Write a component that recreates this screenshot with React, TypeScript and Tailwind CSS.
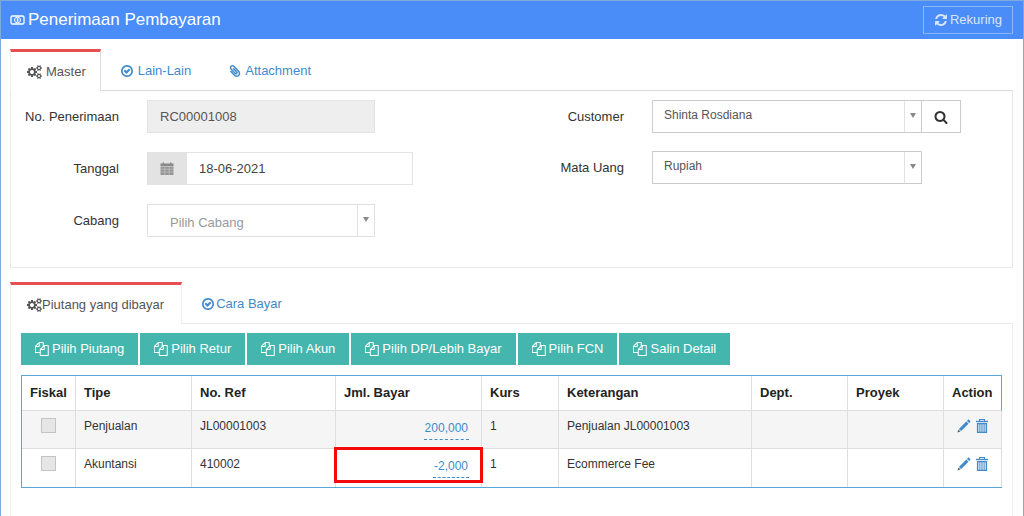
import React from 'react';
import { FaPaperclip } from 'react-icons/fa';

type IconProps = { className?: string };

const paths = {
  check:
    'M1299 813l-422 422q-19 19-45 19t-45-19l-294-294q-19-19-19-45t19-45l102-102q19-19 45-19t45 19l147 147 275-275q19-19 45-19t45 19l102 102q19 19 19 45t-19 45zm141 83q0-148-73-273t-198-198-273-73-273 73-198 198-73 273 73 273 198 198 273 73 273-73 198-198 73-273zm224 0q0 209-103 385.5t-279.5 279.5-385.5 103-385.5-103-279.5-279.5-103-385.5 103-385.5 279.5-279.5 385.5-103 385.5 103 279.5 279.5 103 385.5z',
  files:
    'M1664 384q40 0 68 28t28 68v1216q0 40-28 68t-68 28h-960q-40 0-68-28t-28-68v-288h-544q-40 0-68-28t-28-68v-672q0-40 20-88t48-76l408-408q28-28 76-48t88-20h416q40 0 68 28t28 68v328q68-40 128-40h416zm-544 213l-299 299h299v-299zm-640-384l-299 299h299v-299zm196 647l316-316v-416h-384v416q0 40-28 68t-68 28h-416v640h512v-256q0-40 20-88t48-76zm956 804v-1152h-384v416q0 40-28 68t-68 28h-416v640h896z',
  refresh:
    'M1639 1056q0 5-1 7-64 268-268 434.5t-478 166.5q-146 0-282.5-55t-243.5-157l-129 129q-19 19-45 19t-45-19-19-45v-448q0-26 19-45t45-19h448q26 0 45 19t19 45-19 45l-137 137q71 66 161 102t187 36q134 0 250-65t186-179q11-17 53-117 8-23 30-23h192q13 0 22.5 9.5t9.5 22.5zm25-800v448q0 26-19 45t-45 19h-448q-26 0-45-19t-19-45 19-45l138-138q-148-137-349-137-134 0-250 65t-186 179q-11 17-53 117-8 23-30 23h-199q-13 0-22.5-9.5t-9.5-22.5v-7q65-268 270-434.5t480-166.5q146 0 284 55.5t245 156.5l130-129q19-19 45-19t45 19 19 45z',
  search:
    'M1216 832q0-185-131.5-316.5t-316.5-131.5-316.5 131.5-131.5 316.5 131.5 316.5 316.5 131.5 316.5-131.5 131.5-316.5zm512 832q0 52-38 90t-90 38q-54 0-90-38l-343-342q-179 124-399 124-143 0-273.5-55.5t-225-150-150-225-55.5-273.5 55.5-273.5 150-225 225-150 273.5-55.5 273.5 55.5 225 150 150 225 55.5 273.5q0 220-124 399l343 343q37 37 37 90z',
  cogs:
    'M896 896q0-106-75-181t-181-75-181 75-75 181 75 181 181 75 181-75 75-181zm768 512q0-52-38-90t-90-38-90 38-38 90q0 53 37.5 90.5t90.5 37.5 90.5-37.5 37.5-90.5zm0-1024q0-52-38-90t-90-38-90 38-38 90q0 53 37.5 90.5t90.5 37.5 90.5-37.5 37.5-90.5zm-384 421v185q0 10-7 19.5t-16 10.5l-155 24q-11 35-32 76 34 48 90 115 7 11 7 20 0 12-7 19-23 30-82.5 89.5t-78.5 59.5q-11 0-21-7l-115-90q-37 19-77 31-11 108-23 155-7 24-30 24h-186q-11 0-20-7.5t-10-17.5l-23-153q-34-10-75-31l-118 89q-7 7-20 7-11 0-21-8-144-133-144-160 0-9 7-19 10-14 41-53t47-61q-23-44-35-82l-152-24q-10-1-17-9.5t-7-19.5v-185q0-10 7-19.5t16-10.5l155-24q11-35 32-76-34-48-90-115-7-11-7-20 0-12 7-20 22-30 82-89t79-59q11 0 21 7l115 90q34-18 77-32 11-108 23-154 7-24 30-24h186q11 0 20 7.5t10 17.5l23 153q34 10 75 31l118-89q8-7 20-7 11 0 21 8 144 133 144 160 0 8-7 19-12 16-42 54t-45 60q23 48 34 82l152 23q10 2 17 10.5t7 19.5zm640 533v140q0 16-149 31-12 27-30 52 51 113 51 138 0 4-4 7-122 71-124 71-8 0-46-47t-52-68q-20 2-30 2t-30-2q-14 21-52 68t-46 47q-2 0-124-71-4-3-4-7 0-25 51-138-18-25-30-52-149-15-149-31v-140q0-16 149-31 13-29 30-52-51-113-51-138 0-4 4-7 4-2 35-20t59-34 30-16q8 0 46 46.5t52 67.5q20-2 30-2t30 2q51-71 92-112l6-2q4 0 124 70 4 3 4 7 0 25-51 138 17 23 30 52 149 15 149 31zm0-1024v140q0 16-149 31-12 27-30 52 51 113 51 138 0 4-4 7-122 71-124 71-8 0-46-47t-52-68q-20 2-30 2t-30-2q-14 21-52 68t-46 47q-2 0-124-71-4-3-4-7 0-25 51-138-18-25-30-52-149-15-149-31v-140q0-16 149-31 13-29 30-52-51-113-51-138 0-4 4-7 4-2 35-20t59-34 30-16q8 0 46 46.5t52 67.5q20-2 30-2t30 2q51-71 92-112l6-2q4 0 124 70 4 3 4 7 0 25-51 138 17 23 30 52 149 15 149 31z',
};

function Icon({ name, className }: IconProps & { name: keyof typeof paths }) {
  return (
    <svg viewBox={name === 'cogs' ? '0 0 1920 1792' : '0 0 1792 1792'} fill="currentColor" aria-hidden="true" className={className}>
      <path d={paths[name]} />
    </svg>
  );
}

function MoneyIcon({ className }: IconProps) {
  return (
    <svg viewBox="0 0 15 10" fill="none" stroke="currentColor" aria-hidden="true" className={className}>
      <path d="M2 1h11a1.5 1.5 0 0 0 1 1v6a1.5 1.5 0 0 0-1 1H2a1.5 1.5 0 0 0-1-1V2a1.5 1.5 0 0 0 1-1z" strokeWidth="1.3" />
      <ellipse cx="7.5" cy="5" rx="3" ry="2.8" strokeWidth="1" />
      <path d="M7.6 3.2v3.6" strokeWidth="1.5" />
    </svg>
  );
}

function CalendarIcon({ className }: IconProps) {
  return (
    <svg viewBox="0 0 14 14" fill="currentColor" aria-hidden="true" className={className}>
      <path d="M.5 1.5h2v-1H4v1h6v-1h1.500v1h2v2.500H.5z" />
      <path d="M.5 4.500h13V13H.5z" fillOpacity="0.85" />
      <path d="M.5 7.300h13M.5 10h13M4.800 4.500V13M9.200 4.500V13" stroke="#e3e3e3" strokeWidth="0.4" />
    </svg>
  );
}

function PencilIcon({ className }: IconProps) {
  return (
    <svg viewBox="0 0 14 14" fill="currentColor" aria-hidden="true" className={className}>
      <path d="M10.9.9c.4-.4.9-.4 1.3 0l.9.9c.4.4.4.9 0 1.3l-1 1-2.2-2.2z" />
      <path d="M9.3 2.5l2.2 2.2-7.4 7.4-2.2-2.2z" />
      <path d="M1.5 10.5l2 2L.4 13.6z" fill="#5b6670" />
    </svg>
  );
}

function TrashIcon({ className }: IconProps) {
  return (
    <svg viewBox="0 0 14 15" fill="none" stroke="currentColor" aria-hidden="true" className={className}>
      <path d="M4.5 2.4V1h5v1.4" strokeWidth="1.1" />
      <path d="M1 3h12" strokeWidth="1.4" />
      <path d="M2.500 5.200h9v8.600h-9z" fill="currentColor" fillOpacity="0.25" strokeWidth="1.2" />
      <path d="M4.800 5.500v8M7 5.500v8M9.200 5.500v8" strokeWidth="0.8" />
    </svg>
  );
}

type SelectProps = { id: string; value: string; className: string; box: string };

function SelectBox({ id, value, className, box }: SelectProps) {
  return (
    <div className={`relative flex ${box}`}>
      <select id={id} className={`w-full appearance-none border bg-white pr-6 outline-none ${className}`}>
        <option>{value}</option>
      </select>
      {/* arrow on top of the native select */}
      <span className="pointer-events-none absolute inset-y-px right-px flex w-[17px] justify-center border-l border-[#e2e2e2] pt-3">
        <svg viewBox="0 0 6 5" className="h-[5px] w-[6px] fill-[#888]" aria-hidden="true">
          <path d="M0 0h6L3 5z" />
        </svg>
      </span>
    </div>
  );
}

const buttons = ['Pilih Piutang', 'Pilih Retur', 'Pilih Akun', 'Pilih DP/Lebih Bayar', 'Pilih FCN', 'Salin Detail'];

const columns = [
  { title: 'Fiskal', width: 'w-[54px]' },
  { title: 'Tipe', width: 'w-[116px]' },
  { title: 'No. Ref', width: 'w-[144px]' },
  { title: 'Jml. Bayar', width: 'w-[146px]' },
  { title: 'Kurs', width: 'w-[77px]' },
  { title: 'Keterangan', width: '' },
  { title: 'Dept.', width: 'w-[96px]' },
  { title: 'Proyek', width: 'w-[96px]' },
  { title: 'Action', width: 'w-[58px]' },
];

const rows = [
  { tipe: 'Penjualan', ref: 'JL00001003', bayar: '200,000', kurs: '1', ket: 'Penjualan JL00001003', marked: false },
  { tipe: 'Akuntansi', ref: '410002', bayar: '-2,000', kurs: '1', ket: 'Ecommerce Fee', marked: true },
];

const cell = 'border-r border-b border-[#dedede] px-2 pt-[7px] align-top group-last:border-b-0';

function App() {
  return (
    <div className="flex min-h-screen flex-col border-x border-t border-[#7fa8dc] bg-white font-['Liberation_Sans',Arial,sans-serif] text-[13px] text-[#333]">
      {/* title bar */}
      <header className="flex h-[38px] items-center justify-between bg-[#4b8df8] pr-2.5 pl-[9px] text-white">
        <h1 className="flex items-center gap-[3px] text-[17px]">
          <MoneyIcon className="h-[10px] w-[15px]" />
          Penerimaan Pembayaran
        </h1>
        <button className="flex h-7 items-center gap-0.5 border border-[#8db8fb] px-2.5 text-[#d6e6ff]">
          <Icon name="refresh" className="size-3.5" />
          Rekuring
        </button>
      </header>

      <main className="flex flex-1 flex-col pt-2.5 pr-2.5 pl-[9px]">
        <nav className="flex">
          <button className="flex h-[42px] items-center gap-1 border-t-3 border-r border-l border-t-[#e74f54] border-r-[#ddd] border-l-[#eee] pr-3.5 pl-4 text-[#555]">
            <Icon name="cogs" className="h-3.5 w-[15px]" />
            Master
          </button>
          <div className="flex flex-1 items-center gap-[38px] border-b border-[#ddd] pt-0.5 pl-[19px] text-[#428bca]">
            <button className="flex items-center gap-1">
              <Icon name="check" className="size-3.5" />
              Lain-Lain
            </button>
            <button className="flex items-center gap-1">
              <FaPaperclip className="size-3 -scale-x-100" />
              Attachment
            </button>
          </div>
        </nav>

        <section className="grid grid-cols-[538px_1fr] border-x border-b border-[#e8e8e8] pt-[9px] pb-[30px]">
          <div className="grid grid-cols-[108px_1fr] content-start items-center gap-x-7 gap-y-[19px]">
            <label htmlFor="nomor" className="text-right">No. Penerimaan</label>
            <input id="nomor" readOnly value="RC00001008" className="h-[33px] w-[228px] border border-[#e3e3e3] bg-[#eee] px-3 text-[#555] outline-none" />

            <label htmlFor="tanggal" className="text-right">Tanggal</label>
            <div className="flex h-[33px] w-[266px]">
              <span className="flex w-[39px] items-center justify-center bg-[#e3e3e3] text-[#888]">
                <CalendarIcon className="size-3.5" />
              </span>
              <input id="tanggal" defaultValue="18-06-2021" className="w-full min-w-0 flex-1 border border-[#e3e3e3] px-3 text-[#444] outline-none" />
            </div>

            <label htmlFor="cabang" className="text-right">Cabang</label>
            <SelectBox id="cabang" value="Pilih Cabang" box="h-[33px] w-[228px]" className="border-[#e0e0e0] pt-1 pl-[22px] text-[#999]" />
          </div>

          <div className="grid grid-cols-[75px_1fr] content-start items-center gap-x-7 gap-y-[18px]">
            <label htmlFor="customer" className="text-right">Customer</label>
            <div className="flex h-[33px]">
              <SelectBox id="customer" value="Shinta Rosdiana" box="w-[270px]" className="border-[#ccc] pb-1 pl-[11px] text-xs text-[#555]" />
              <button aria-label="Cari customer" className="flex w-[39px] items-center justify-center border border-l-0 border-[#ccc]">
                <Icon name="search" className="size-3.5" />
              </button>
            </div>

            <label htmlFor="matauang" className="text-right">Mata Uang</label>
            <SelectBox id="matauang" value="Rupiah" box="h-[33px] w-[270px]" className="border-[#ccc] pb-1 pl-[11px] text-xs text-[#555]" />
          </div>
        </section>

        <nav className="mt-3.5 flex">
          <button className="flex h-[42px] items-center border-t-3 border-r border-l border-t-[#e74f54] border-r-[#eee] border-l-[#eee] pr-[17px] pl-4 text-[#555]">
            <Icon name="cogs" className="h-3.5 w-[15px]" />
            Piutang yang dibayar
          </button>
          <div className="flex flex-1 items-center border-b border-[#e8e8e8] pt-0.5 pl-[19px] text-[#428bca]">
            <button className="flex items-center gap-px">
              <Icon name="check" className="size-3.5" />
              Cara Bayar
            </button>
          </div>
        </nav>

        <section className="flex-1 border-x border-[#eee] px-2.5 pt-[9px]">
          <div className="mb-2.5 flex gap-0.5">
            {buttons.map((b) => (
              <button key={b} className="flex h-8 items-center gap-[3px] bg-[#44b6ae] px-3.5 whitespace-nowrap text-white">
                <Icon name="files" className="size-3.5" />
                {b}
              </button>
            ))}
          </div>

          <table className="w-full table-fixed border-separate border-spacing-0 border-y border-l border-[#5aa6d6] text-xs">
            <thead>
              <tr className="h-[35px] text-left text-[13px] text-[#222]">
                {columns.map((c) => (
                  <th key={c.title} className={`border-r border-b border-[#dedede] px-2 whitespace-nowrap last:border-r-[#5aa6d6] ${c.width}`}>
                    {c.title}
                  </th>
                ))}
              </tr>
            </thead>
            <tbody>
              {rows.map((r) => (
                <tr key={r.ref} className="group h-[38px] odd:bg-[#f5f5f5]">
                  <td className={`${cell} text-center`}>
                    <input type="checkbox" disabled aria-label={`Fiskal ${r.ref}`} className="size-[15px] appearance-none border border-[#c4c4c4] bg-[#e6e6e6]" />
                  </td>
                  <td className={cell}>{r.tipe}</td>
                  <td className={cell}>{r.ref}</td>
                  <td className={`relative ${cell}`}>
                    <div className="flex justify-end pr-1">
                      <a href="#bayar" className="border-b border-dashed border-[#428bca] px-px pt-0.5 pb-[3px] text-[#428bca]">{r.bayar}</a>
                    </div>
                    {/* red marker around the cell */}
                    {r.marked && <span className="absolute -inset-x-0.5 -top-0.5 bottom-1 border-3 border-[#f30a0a]" />}
                  </td>
                  <td className={cell}>{r.kurs}</td>
                  <td className={cell}>{r.ket}</td>
                  <td className={cell}></td>
                  <td className={cell}></td>
                  <td className={cell}>
                    <div className="flex justify-center gap-1 text-[#428bca]">
                      <button aria-label={`Ubah ${r.ref}`}><PencilIcon className="size-3.5" /></button>
                      <button aria-label={`Hapus ${r.ref}`}><TrashIcon className="h-4 w-3.5" /></button>
                    </div>
                  </td>
                </tr>
              ))}
            </tbody>
          </table>
        </section>
      </main>
    </div>
  );
}

export default App;
